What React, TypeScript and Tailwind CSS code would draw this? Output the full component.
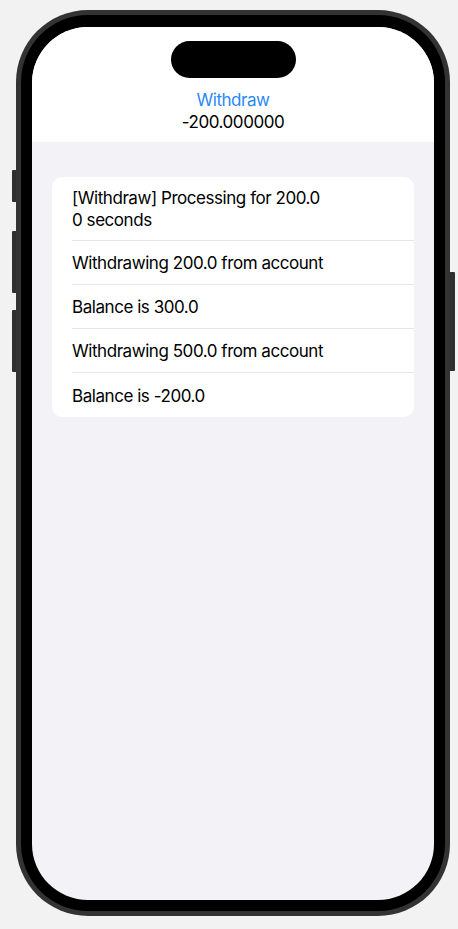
import React from 'react';

const rows = [
  ['[Withdraw] Processing for 200.0', '0 seconds'],
  ['Withdrawing 200.0 from account'],
  ['Balance is 300.0'],
  ['Withdrawing 500.0 from account'],
  ['Balance is -200.0'],
];

export default function App() {
  return (
    <div
      className="min-h-[929px] w-full bg-[#f2f2f2] pt-[10px] pl-[16px]"
      style={{ fontFamily: 'Inter, "Noto Sans", sans-serif' }}
    >
      <div className="relative w-[434px] h-[906px]">
        {/* side buttons */}
        <div className="absolute left-[-4px] top-[160px] w-[4px] h-[32px] rounded-l-[1px] bg-[#2f2f2f]" />
        <div className="absolute left-[-4px] top-[221px] w-[4px] h-[62px] rounded-l-[1px] bg-[#2f2f2f]" />
        <div className="absolute left-[-4px] top-[300px] w-[4px] h-[62px] rounded-l-[1px] bg-[#2f2f2f]" />
        <div className="absolute right-[-5px] top-[262px] w-[5px] h-[99px] rounded-r-[1px] bg-[#2f2f2f]" />

        {/* frame */}
        <div className="h-full w-full rounded-[72px] bg-[#333333] p-[5px]">
          <div className="h-full w-full rounded-[67px] bg-black p-[11px] pt-[12px]">
            <div className="flex h-full w-full flex-col overflow-hidden rounded-[56px] bg-[#f2f2f7]">
              {/* nav header with dynamic island */}
              <div className="flex h-[115px] flex-col items-center bg-white pt-[14px] text-[17px] leading-[22px] tracking-[-0.45px]">
                <div className="h-[37px] w-[125px] rounded-full bg-black" />
                <div className="mt-[11px] text-[#2a88f7]">Withdraw</div>
                <div className="text-black">-200.000000</div>
              </div>

              {/* list */}
              <div className="px-[20px] pt-[35px]">
                <div className="overflow-hidden rounded-[10px] bg-white">
                  {rows.map((lines, i) => (
                    <div key={i} className="pl-[20px]">
                      <div
                        className={
                          'flex flex-col justify-center pr-[20px] pt-[1px] text-[17px] leading-[22px] tracking-[-0.45px] text-black ' +
                          (lines.length > 1 ? 'h-[64px]' : 'h-[44px]') +
                          (i < rows.length - 1 ? ' border-b border-[#e6e6eb]' : '')
                        }
                      >
                        {lines.map((t, j) => (
                          <div key={j}>{t}</div>
                        ))}
                      </div>
                    </div>
                  ))}
                </div>
              </div>
            </div>
          </div>
        </div>
      </div>
    </div>
  );
}
